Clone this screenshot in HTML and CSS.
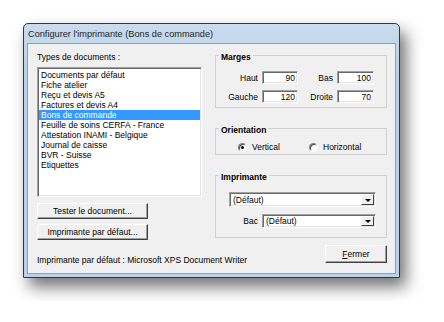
FILE: index.html
```html
<!DOCTYPE html>
<html lang="fr">
<head>
  <meta charset="UTF-8">
  <title>Configurer l'imprimante</title>
  <link rel="stylesheet" href="styles.css">
</head>
<body>

<div class="window">
  <div class="titlebar">Configurer l'imprimante (Bons de commande)</div>

  <div class="client">
    <!-- colonne gauche : types de documents -->
    <div class="col-left">
      <div class="caption">Types de documents :</div>
      <ul class="listbox">
        <li>Documents par défaut</li>
        <li>Fiche atelier</li>
        <li>Reçu et devis A5</li>
        <li>Factures et devis A4</li>
        <li class="selected">Bons de commande</li>
        <li>Feuille de soins CERFA - France</li>
        <li>Attestation INAMI - Belgique</li>
        <li>Journal de caisse</li>
        <li>BVR - Suisse</li>
        <li>Etiquettes</li>
      </ul>
      <div class="button-group">
        <button class="btn">Tester le document...</button>
        <button class="btn">Imprimante par défaut...</button>
      </div>
      <div class="status">Imprimante par défaut : Microsoft XPS Document Writer</div>
    </div>

    <!-- colonne droite : réglages -->
    <div class="col-right">
      <fieldset class="group marges">
        <legend>Marges</legend>
        <div class="marges-grid">
          <label>Haut</label><input class="field" type="text" value="90">
          <label>Bas</label><input class="field" type="text" value="100">
          <label>Gauche</label><input class="field" type="text" value="120">
          <label>Droite</label><input class="field" type="text" value="70">
        </div>
      </fieldset>

      <fieldset class="group orientation">
        <legend>Orientation</legend>
        <div class="radio-row">
          <label class="option"><span class="radio checked"></span>Vertical</label>
          <label class="option"><span class="radio"></span>Horizontal</label>
        </div>
      </fieldset>

      <fieldset class="group imprimante">
        <legend>Imprimante</legend>
        <div class="combo combo-wide">
          <span class="combo-value">(Défaut)</span>
          <span class="combo-arrow"></span>
        </div>
        <div class="bac-row">
          <label>Bac</label>
          <div class="combo combo-bac">
            <span class="combo-value">(Défaut)</span>
            <span class="combo-arrow"></span>
          </div>
        </div>
      </fieldset>

      <div class="actions">
        <button class="btn btn-close"><u>F</u>ermer</button>
      </div>
    </div>
  </div>
</div>

</body>
</html>
```

FILE: styles.css
```css
* {
  box-sizing: border-box;
}

body {
  margin: 0;
  padding: 23px;
  background-color: #fff;
  font-family: "Liberation Sans", Arial, sans-serif;
  font-size: 8.5px;
  color: #000;
}

.window {
  width: 377px;
  height: 255px;
  display: flex;
  flex-direction: column;
  border: 1px solid #2a3a4c;
  border-radius: 5px 5px 0 0;
  background: linear-gradient(#cadcee, #b8d0e8 20%, #b9d1ea);
  box-shadow: 6px 9px 16px rgba(0, 0, 0, 0.55);
}

.titlebar {
  height: 19px;
  padding: 3px 4px 0;
  font-family: "Liberation Sans", Arial, sans-serif;
  font-size: 9.2px;
  line-height: 14px;
  color: #1e1e1e;
}

.client {
  flex: 1;
  display: flex;
  gap: 13px;
  margin: 0 3px 3px;
  padding: 8px 8px 0 9px;
  background-color: #f0f0f0;
  border: 1px solid #8ba2b9;
}

.col-left {
  width: 165px;
  display: flex;
  flex-direction: column;
}

.col-right {
  width: 172px;
  display: flex;
  flex-direction: column;
  margin-top: -4px;
}

.caption {
  line-height: 10px;
}

.listbox {
  list-style: none;
  margin: 5px 0 0;
  height: 130px;
  padding: 2px 1px;
  background-color: #fff;
  border: 1px solid;
  border-color: #a0a0a0 #fff #fff #a0a0a0;
  box-shadow: inset 1px 1px #696969, inset -1px -1px #e3e3e3;
}

.listbox li {
  line-height: 10px;
  padding-left: 2px;
  white-space: nowrap;
}

.listbox li.selected {
  background-color: #3399ff;
  color: #fff;
}

.button-group {
  display: flex;
  flex-direction: column;
  gap: 5px;
  margin-top: 6px;
}

.btn {
  width: 111px;
  height: 16px;
  padding: 0;
  font: inherit;
  color: #000;
  background-color: #f0f0f0;
  border: 1px solid;
  border-color: #fff #404040 #404040 #fff;
  box-shadow: inset -1px -1px #a0a0a0;
}

.status {
  margin-top: 15px;
  line-height: 10px;
  white-space: nowrap;
}

/* cadres de groupe */
.group {
  margin: 0;
  padding: 0;
  min-width: 0;
  border: 1px solid #d0d0d0;
}

.group legend {
  margin-left: 3px;
  padding: 4px 2px 0;
  line-height: 10px;
  font-weight: bold;
}

.marges {
  padding-bottom: 4px;
}

.marges-grid {
  display: grid;
  grid-template-columns: 33px 36px 31px 37px;
  grid-auto-rows: 13px;
  column-gap: 4px;
  row-gap: 6px;
  align-items: center;
  margin: 9px 0 0 9px;
}

.marges-grid label {
  text-align: right;
}

.field {
  width: 100%;
  height: 13px;
  padding: 0 2px 0 0;
  font: inherit;
  text-align: right;
  background-color: #fff;
  border: 1px solid;
  border-color: #a0a0a0 #fff #fff #a0a0a0;
  box-shadow: inset 1px 1px #696969, inset -1px -1px #e3e3e3;
  outline: none;
}

.orientation {
  margin-top: 13px;
  padding-bottom: 2px;
}

.radio-row {
  display: flex;
  height: 10px;
  align-items: center;
  margin: 7px 0 0 22px;
}

.option {
  display: flex;
  align-items: center;
  gap: 5px;
  width: 71px;
}

.radio {
  width: 9px;
  height: 9px;
  border-radius: 50%;
  background-color: #fff;
  border: 1px solid;
  border-color: #808080 #fff #fff #808080;
  box-shadow: inset 1px 1px #404040;
  display: flex;
  align-items: center;
  justify-content: center;
}

.radio.checked::after {
  content: "";
  width: 3px;
  height: 3px;
  border-radius: 50%;
  background-color: #000;
}

.imprimante {
  margin-top: 13px;
  padding-bottom: 9px;
}

.combo {
  display: flex;
  align-items: center;
  background-color: #fff;
  border: 1px solid;
  border-color: #a0a0a0 #fff #fff #a0a0a0;
  box-shadow: inset 1px 1px #696969, inset -1px -1px #e3e3e3;
  padding: 1px;
}

.combo-wide {
  height: 15px;
  margin: 10px 10px 0 13px;
}

.combo-value {
  flex: 1;
  padding-left: 2px;
}

.combo-arrow {
  width: 13px;
  height: 100%;
  background-color: #f0f0f0;
  border: 1px solid;
  border-color: #fff #404040 #404040 #fff;
  display: flex;
  align-items: center;
  justify-content: center;
}

.combo-arrow::after {
  content: "";
  border-left: 3px solid transparent;
  border-right: 3px solid transparent;
  border-top: 3px solid #000;
  margin-top: 1px;
}

.bac-row {
  display: flex;
  align-items: center;
  justify-content: flex-end;
  gap: 4px;
  margin: 7px 10px 0 13px;
}

.combo-bac {
  width: 114px;
  height: 14px;
}

.actions {
  display: flex;
  justify-content: flex-end;
  margin-top: 7px;
}

.btn-close {
  width: 62px;
  height: 18px;
}
```
